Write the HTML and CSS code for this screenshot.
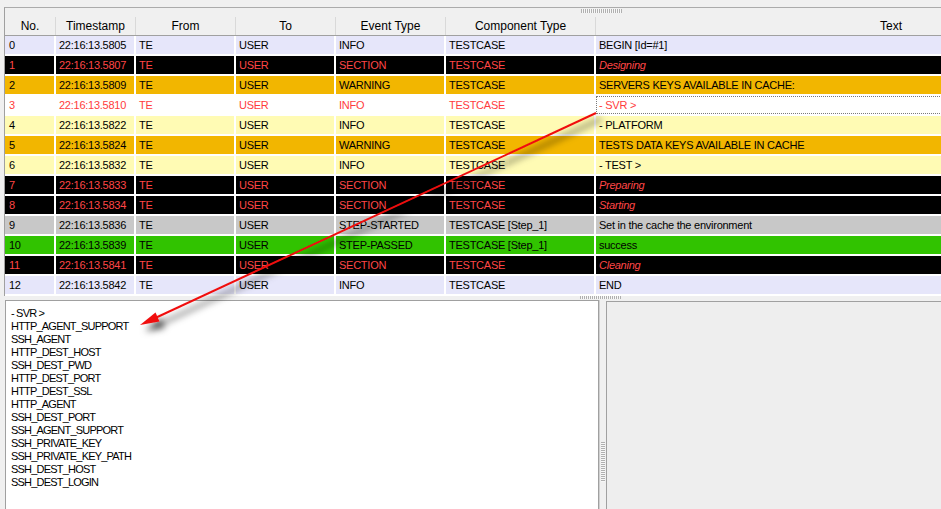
FILE: index.html
```
<!DOCTYPE html>
<html>
<head>
<meta charset="utf-8">
<link rel="stylesheet" href="styles.css">
</head>
<body>
<div class="app">
  <div class="list-panel">
    <div class="list-head">
      <div class="grip-row"><span class="grip-h"></span></div>
      <div class="head-cells">
        <div class="hc c-no">No.</div>
        <div class="hc c-ts">Timestamp</div>
        <div class="hc c-from">From</div>
        <div class="hc c-to">To</div>
        <div class="hc c-ev">Event Type</div>
        <div class="hc c-comp">Component Type</div>
        <div class="hc c-text hc-text">Text</div>
      </div>
    </div>
    <div class="rows">
      <div class="row r-lav"><div class="cell c-no">0</div><div class="cell c-ts">22:16:13.5805</div><div class="cell c-from">TE</div><div class="cell c-to">USER</div><div class="cell c-ev">INFO</div><div class="cell c-comp">TESTCASE</div><div class="cell c-text">BEGIN [Id=#1]</div></div>
      <div class="row r-black"><div class="cell c-no">1</div><div class="cell c-ts">22:16:13.5807</div><div class="cell c-from">TE</div><div class="cell c-to">USER</div><div class="cell c-ev">SECTION</div><div class="cell c-comp">TESTCASE</div><div class="cell c-text it">Designing</div></div>
      <div class="row r-orange"><div class="cell c-no">2</div><div class="cell c-ts">22:16:13.5809</div><div class="cell c-from">TE</div><div class="cell c-to">USER</div><div class="cell c-ev">WARNING</div><div class="cell c-comp">TESTCASE</div><div class="cell c-text">SERVERS KEYS AVAILABLE IN CACHE:</div></div>
      <div class="row r-white"><div class="cell c-no">3</div><div class="cell c-ts">22:16:13.5810</div><div class="cell c-from">TE</div><div class="cell c-to">USER</div><div class="cell c-ev">INFO</div><div class="cell c-comp">TESTCASE</div><div class="cell c-text focus">- SVR &gt;</div></div>
      <div class="row r-yellow"><div class="cell c-no">4</div><div class="cell c-ts">22:16:13.5822</div><div class="cell c-from">TE</div><div class="cell c-to">USER</div><div class="cell c-ev">INFO</div><div class="cell c-comp">TESTCASE</div><div class="cell c-text">- PLATFORM</div></div>
      <div class="row r-orange"><div class="cell c-no">5</div><div class="cell c-ts">22:16:13.5824</div><div class="cell c-from">TE</div><div class="cell c-to">USER</div><div class="cell c-ev">WARNING</div><div class="cell c-comp">TESTCASE</div><div class="cell c-text">TESTS DATA KEYS AVAILABLE IN CACHE</div></div>
      <div class="row r-yellow"><div class="cell c-no">6</div><div class="cell c-ts">22:16:13.5832</div><div class="cell c-from">TE</div><div class="cell c-to">USER</div><div class="cell c-ev">INFO</div><div class="cell c-comp">TESTCASE</div><div class="cell c-text">- TEST &gt;</div></div>
      <div class="row r-black"><div class="cell c-no">7</div><div class="cell c-ts">22:16:13.5833</div><div class="cell c-from">TE</div><div class="cell c-to">USER</div><div class="cell c-ev">SECTION</div><div class="cell c-comp">TESTCASE</div><div class="cell c-text it">Preparing</div></div>
      <div class="row r-black"><div class="cell c-no">8</div><div class="cell c-ts">22:16:13.5834</div><div class="cell c-from">TE</div><div class="cell c-to">USER</div><div class="cell c-ev">SECTION</div><div class="cell c-comp">TESTCASE</div><div class="cell c-text it">Starting</div></div>
      <div class="row r-gray"><div class="cell c-no">9</div><div class="cell c-ts">22:16:13.5836</div><div class="cell c-from">TE</div><div class="cell c-to">USER</div><div class="cell c-ev">STEP-STARTED</div><div class="cell c-comp">TESTCASE [Step_1]</div><div class="cell c-text">Set in the cache the environment</div></div>
      <div class="row r-green"><div class="cell c-no">10</div><div class="cell c-ts">22:16:13.5839</div><div class="cell c-from">TE</div><div class="cell c-to">USER</div><div class="cell c-ev">STEP-PASSED</div><div class="cell c-comp">TESTCASE [Step_1]</div><div class="cell c-text">success</div></div>
      <div class="row r-black"><div class="cell c-no">11</div><div class="cell c-ts">22:16:13.5841</div><div class="cell c-from">TE</div><div class="cell c-to">USER</div><div class="cell c-ev">SECTION</div><div class="cell c-comp">TESTCASE</div><div class="cell c-text it">Cleaning</div></div>
      <div class="row r-lav"><div class="cell c-no">12</div><div class="cell c-ts">22:16:13.5842</div><div class="cell c-from">TE</div><div class="cell c-to">USER</div><div class="cell c-ev">INFO</div><div class="cell c-comp">TESTCASE</div><div class="cell c-text">END</div></div>
    </div>
  </div>
  <div class="hsplit"><span class="grip-h grip-bottom"></span></div>
  <div class="bottom">
    <div class="detail">
      <div>- SVR &gt;</div>
      <div>HTTP_AGENT_SUPPORT</div>
      <div>SSH_AGENT</div>
      <div>HTTP_DEST_HOST</div>
      <div>SSH_DEST_PWD</div>
      <div>HTTP_DEST_PORT</div>
      <div>HTTP_DEST_SSL</div>
      <div>HTTP_AGENT</div>
      <div>SSH_DEST_PORT</div>
      <div>SSH_AGENT_SUPPORT</div>
      <div>SSH_PRIVATE_KEY</div>
      <div>SSH_PRIVATE_KEY_PATH</div>
      <div>SSH_DEST_HOST</div>
      <div>SSH_DEST_LOGIN</div>
    </div>
    <div class="vsplit"><span class="grip-v"></span></div>
    <div class="side"></div>
  </div>
  <svg class="arrow" width="941" height="509" viewBox="0 0 941 509">
    <defs>
      <filter id="sh" x="-10%" y="-10%" width="130%" height="130%">
        <feDropShadow dx="5" dy="6" stdDeviation="3.5" flood-color="#000" flood-opacity="0.8"/>
      </filter>
    </defs>
    <g filter="url(#sh)">
      <line x1="596" y1="113" x2="152" y2="319.5" stroke="#f01010" stroke-width="2"/>
      <polygon points="140,325 159.5,321.5 155.5,312.5" fill="#f01010"/>
    </g>
  </svg>
</div>
</body>
</html>
```
FILE: styles.css
```
html, body {
  margin: 0;
  padding: 0;
}
body {
  width: 941px;
  height: 509px;
  overflow: hidden;
  background: #f0f0f0;
  font-family: "Liberation Sans", Arial, sans-serif;
  color: #000;
}
.app {
  position: relative;
  width: 941px;
  height: 509px;
  overflow: hidden;
  padding-top: 7px;
  box-sizing: border-box;
  display: flex;
  flex-direction: column;
}
.list-panel {
  flex: none;
  margin-left: 4px;
  border-left: 1px solid #a0a0a0;
  border-top: 1px solid #ababab;
  background: #fff;
  overflow: hidden;
}
.list-head {
  width: 1179px;
  height: 27px;
  background: #f0f0f0;
  border-bottom: 1px solid #a0a0a0;
  display: flex;
  flex-direction: column;
}
.grip-row {
  height: 9px;
  flex: none;
  padding-top: 1px;
  box-sizing: border-box;
  display: flex;
  align-items: flex-start;
  padding-left: 576px;
}
.grip-h {
  display: block;
  width: 41px;
  height: 4px;
  background: repeating-linear-gradient(90deg, #b0b0b0 0 1px, #f8f8f8 1px 2px);
}
.head-cells {
  display: flex;
  height: 18px;
}
.hc {
  height: 18px;
  box-sizing: border-box;
  border-right: 1px solid #d9d9d9;
  display: flex;
  align-items: center;
  justify-content: center;
  font-size: 12px;
  white-space: nowrap;
}
.hc-text {
  justify-content: flex-start;
  padding-left: 284px;
  border-right: none;
}
.c-no { width: 51px; }
.c-ts { width: 80px; }
.c-from { width: 100px; }
.c-to { width: 100px; }
.c-ev { width: 110px; }
.c-comp { width: 150px; }
.c-text { width: 588px; }

.rows {
  width: 1179px;
  background: #fff;
}
.row {
  display: flex;
  height: 20px;
  padding: 0 0 2px;
  box-sizing: border-box;
}
.cell {
  height: 18px;
  line-height: 18px;
  box-sizing: border-box;
  border-right: 2px solid #fff;
  padding-left: 3px;
  background: var(--bg);
  font-size: 11px;
  letter-spacing: -0.25px;
  white-space: nowrap;
  overflow: hidden;
}
.cell.c-no { padding-left: 4px; }
.cell.c-text { border-right: none; }
.it { font-style: italic; }
.focus {
  outline: 1px dotted #7a7a7a;
  outline-offset: -1px;
}
.r-lav { --bg: #e6e6fa; color: #000; }
.r-black { --bg: #000; color: #ff4646; }
.r-orange { --bg: #f2b600; color: #000; }
.r-white { --bg: #fff; color: #ff3c3c; }
.r-yellow { --bg: #fffbb4; color: #000; }
.r-gray { --bg: #c8c8c8; color: #000; }
.r-green { --bg: #31c300; color: #000; }

.hsplit {
  flex: none;
  height: 4px;
  display: flex;
  align-items: flex-start;
}
.grip-bottom {
  margin-left: 580px;
  height: 3px;
}
.bottom {
  flex: 1;
  display: flex;
  min-height: 0;
}
.detail {
  width: 594px;
  margin-left: 5px;
  box-sizing: border-box;
  border: 1px solid #a0a0a0;
  border-bottom: none;
  background: #fff;
  padding: 6px 5px;
  font-size: 11px;
  line-height: 13px;
  letter-spacing: -0.8px;
  white-space: nowrap;
}
.vsplit {
  width: 7px;
  box-sizing: border-box;
  border-left: 1px solid #d0d0d0;
  padding-left: 1px;
  padding-top: 142px;
}
.grip-v {
  display: block;
  width: 4px;
  height: 40px;
  background: repeating-linear-gradient(180deg, #b0b0b0 0 1px, #f8f8f8 1px 2px);
}
.side {
  flex: 1;
  margin-top: 1px;
  border-left: 1px solid #a0a0a0;
  border-top: 1px solid #a0a0a0;
  background: #eeeeee;
}
.arrow {
  position: absolute;
  left: 0;
  top: 0;
  pointer-events: none;
}
```
